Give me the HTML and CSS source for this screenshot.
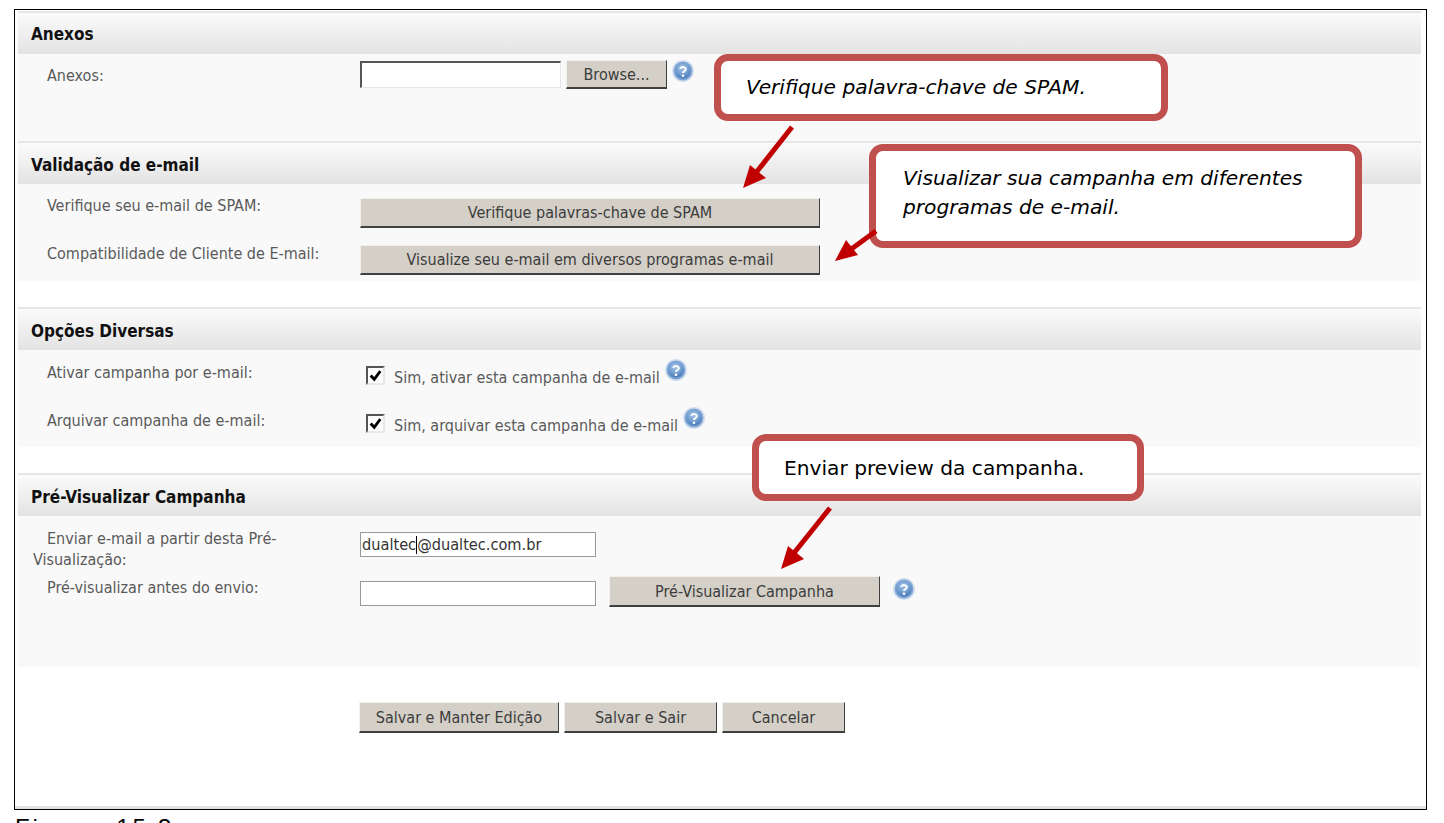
FILE: index.html
```html
<!DOCTYPE html>
<html lang="pt-BR">
<head>
<meta charset="utf-8">
<title>Campanha de e-mail</title>
<link rel="stylesheet" href="styles.css">
</head>
<body>
<main class="frame">
  <section class="section s-anexos">
    <h2 class="head">Anexos</h2>
    <div class="body">
      <div class="row r-anexos">
        <label class="label">Anexos:</label>
        <div class="field">
          <input class="file-box" type="text">
          <button class="btn browse">Browse...</button>
          <svg class="help" viewBox="0 0 22 22"><use href="#help"/></svg>
        </div>
      </div>
    </div>
  </section>
  <section class="section s-valid">
    <h2 class="head">Validação de e-mail</h2>
    <div class="body">
      <div class="row r-spam">
        <label class="label">Verifique seu e-mail de SPAM:</label>
        <div class="field"><button class="btn wide">Verifique palavras-chave de SPAM</button></div>
      </div>
      <div class="row r-compat">
        <label class="label">Compatibilidade de Cliente de E-mail:</label>
        <div class="field"><button class="btn wide">Visualize seu e-mail em diversos programas e-mail</button></div>
      </div>
    </div>
  </section>
  <section class="section s-opts">
    <h2 class="head">Opções Diversas</h2>
    <div class="body">
      <div class="row r-ativar">
        <label class="label">Ativar campanha por e-mail:</label>
        <div class="field check">
          <span class="box"><svg viewBox="0 0 14 14"><path d="M2.5 7 L5.8 10.5 L11.5 3" /></svg></span>
          <span class="check-text">Sim, ativar esta campanha de e-mail</span>
          <svg class="help" viewBox="0 0 22 22"><use href="#help"/></svg>
        </div>
      </div>
      <div class="row r-arquivar">
        <label class="label">Arquivar campanha de e-mail:</label>
        <div class="field check">
          <span class="box"><svg viewBox="0 0 14 14"><path d="M2.5 7 L5.8 10.5 L11.5 3" /></svg></span>
          <span class="check-text">Sim, arquivar esta campanha de e-mail</span>
          <svg class="help" viewBox="0 0 22 22"><use href="#help"/></svg>
        </div>
      </div>
    </div>
  </section>
  <section class="section s-prev">
    <h2 class="head">Pré-Visualizar Campanha</h2>
    <div class="body">
      <div class="row r-enviar">
        <label class="label wrap">Enviar e-mail a partir desta Pré-Visualização:</label>
        <div class="field"><div class="text-box">dualtec<i class="caret"></i>@dualtec.com.br</div></div>
      </div>
      <div class="row r-previa">
        <label class="label">Pré-visualizar antes do envio:</label>
        <div class="field">
          <div class="text-box"></div>
          <button class="btn prev-btn">Pré-Visualizar Campanha</button>
          <svg class="help" viewBox="0 0 22 22"><use href="#help"/></svg>
        </div>
      </div>
    </div>
  </section>
  <div class="actions">
    <button class="btn a1">Salvar e Manter Edição</button>
    <button class="btn a2">Salvar e Sair</button>
    <button class="btn a3">Cancelar</button>
  </div>
</main>
<p class="caption">Figura 15.3</p>

<div class="callout c1"><em>Verifique palavra-chave de SPAM.</em></div>
<div class="callout c2"><em>Visualizar sua campanha em diferentes programas de e-mail.</em></div>
<div class="callout c3">Enviar preview da campanha.</div>

<svg class="arrows" viewBox="0 0 1444 823">
  <g class="arrow">
    <path d="M792 127 L755 174"/><path class="tip" d="M743 188 L750 165 L766 178 Z"/>
    <path d="M876 231 L850 250"/><path class="tip" d="M835 261 L846 240 L858 255 Z"/>
    <path d="M830 508 L794 553"/><path class="tip" d="M781 569 L788 546 L804 559 Z"/>
  </g>
</svg>

<svg class="defs" width="0" height="0">
  <defs>
    <radialGradient id="helpFill" cx="45%" cy="30%" r="75%">
      <stop offset="0" stop-color="#a4c3e8"/>
      <stop offset="0.6" stop-color="#6f9bd0"/>
      <stop offset="1" stop-color="#3d6eaf"/>
    </radialGradient>
    <symbol id="help" viewBox="0 0 22 22">
      <circle cx="11" cy="11" r="11" fill="#d3dfef"/>
      <circle cx="11" cy="11" r="9.4" fill="#7ba3d4"/>
      <circle cx="11" cy="11" r="7.6" fill="url(#helpFill)"/>
      <path d="M8.2 8.8 C8.2 6.6 13.8 6.4 13.8 9.2 C13.8 11 11 11 11 13" fill="none" stroke="#fff" stroke-width="2"/>
      <circle cx="11" cy="15.8" r="1.3" fill="#fff"/>
    </symbol>
  </defs>
</svg>
</body>
</html>
```
FILE: styles.css
```css
* { box-sizing: border-box; }
html, body { margin: 0; height: 823px; overflow: hidden; background: #fff; }
body {
  position: relative;
  font-family: "DejaVu Sans Condensed", "DejaVu Sans", sans-serif;
  font-size: 16px;
  color: #5a5a5a;
}
.frame {
  margin: 9px 17px 0 14px;
  height: 801px;
  border: 1px solid #000;
  padding: 1px 5px 0 3px;
  box-shadow: inset 0 -3px 0 #e2e2e2;
}
.section { border-top: 2px solid #e6e6e6; }
.head {
  margin: 0;
  display: flex;
  align-items: center;
  padding-left: 13px;
  padding-top: 2px;
  font-size: 17px;
  font-weight: 700;
  color: #111;
  background: linear-gradient(#fbfbfb, #e3e3e3);
}
.body { background: #f9f9f9; }
.s-anexos .head { height: 41px; padding-top: 0; }
.s-anexos .body { height: 87px; }
.s-valid .head { height: 41px; }
.s-valid .body { height: 97px; }
.s-opts { margin-top: 26px; }
.s-opts .head { height: 41px; }
.s-opts .body { height: 97px; }
.s-prev { margin-top: 26px; }
.s-prev .head { height: 41px; }
.s-prev .body { height: 151px; }

.row { display: grid; grid-template-columns: 342px 1fr; }
.label { padding-left: 29px; line-height: 20px; }
.label.wrap { padding-left: 15px; text-indent: 14px; width: 280px; line-height: 21px; }
.field { display: flex; align-items: flex-start; }

.r-anexos { padding-top: 7px; }
.r-anexos .label { padding-top: 5px; }
.r-spam { padding-top: 14px; height: 61px; }
.r-spam .label { margin-top: -2px; }
.r-compat .label { margin-top: -1px; }
.r-ativar { padding-top: 16px; height: 64px; }
.r-ativar .label { margin-top: -3px; }
.r-arquivar .label { margin-top: -3px; }
.r-enviar { padding-top: 16px; height: 65px; }
.r-enviar .label { margin-top: -4px; }
.r-previa .label { margin-top: -3px; }

.btn {
  font: inherit;
  color: #3c3c3c;
  height: 30px;
  padding: 0;
  background: #d4d0c8;
  border: 1px solid;
  border-color: #f2f0ec #404040 #404040 #f2f0ec;
  border-bottom-width: 2px;
  line-height: 26px;
}
.wide { width: 460px; }
.browse { width: 101px; height: 29px; margin-left: 5px; margin-top: -1px; padding-top: 1px; }
.prev-btn { width: 271px; height: 31px; margin: -5px 0 0 13px; padding-top: 2px; }
.file-box {
  width: 201px;
  height: 27px;
  margin: 0;
  background: #fff;
  border: 1px solid;
  border-color: #555 #e6e6e6 #e6e6e6 #555;
  border-width: 2px 1px 1px 2px;
}
.text-box {
  width: 236px;
  height: 25px;
  background: #fff;
  border: 1px solid #999;
  color: #333;
  line-height: 23px;
  padding-left: 1px;
  font-size: 16.2px;
}
.caret {
  display: inline-block;
  width: 1px;
  height: 18px;
  background: #000;
  vertical-align: -4px;
}
.help { width: 22px; height: 22px; flex: none; }
.browse + .help { margin: -1px 0 0 5px; }
.prev-btn + .help { margin: -3px 0 0 13px; }
.check { padding-left: 6px; }
.box {
  width: 19px;
  height: 19px;
  background: #fff;
  border: 2px solid;
  border-color: #555 #e8e8e8 #e8e8e8 #555;
  display: block;
}
.box svg { display: block; width: 15px; height: 15px; }
.box path { fill: none; stroke: #000; stroke-width: 2.6; }
.check-text { margin-left: 9px; line-height: 20px; padding-top: 2px; }
.check .help { margin: -7px 0 0 5px; }

.actions { display: flex; gap: 5px; padding: 35px 0 0 341px; }
.actions .btn { height: 31px; padding-top: 2px; }
.a1 { width: 200px; }
.a2 { width: 153px; }
.a3 { width: 123px; }

.caption {
  margin: 0;
  position: absolute;
  left: 15px;
  top: 815px;
  font-family: "Liberation Sans", sans-serif;
  font-size: 24px;
  line-height: 26px;
  letter-spacing: 2.8px;
  word-spacing: 7px;
  color: #000;
}

.callout {
  position: absolute;
  background: #fff;
  border: 7px solid #c0504d;
  border-radius: 14px;
  color: #000;
  font-family: "DejaVu Sans", sans-serif;
  font-size: 20.2px;
  line-height: 29px;
}
.c1 { left: 714px; top: 54px; width: 454px; height: 67px; padding: 12px 0 0 25px; }
.c2 { left: 869px; top: 144px; width: 493px; height: 104px; padding: 13px 30px 0 27px; }
.c3 { left: 752px; top: 434px; width: 392px; height: 67px; padding: 13px 0 0 25px; }
.arrows { position: absolute; left: 0; top: 0; width: 1444px; height: 823px; pointer-events: none; }
.arrow path { stroke: #c00000; stroke-width: 5; fill: none; }
.arrow .tip { fill: #c00000; stroke: none; }
.defs { position: absolute; }
```
